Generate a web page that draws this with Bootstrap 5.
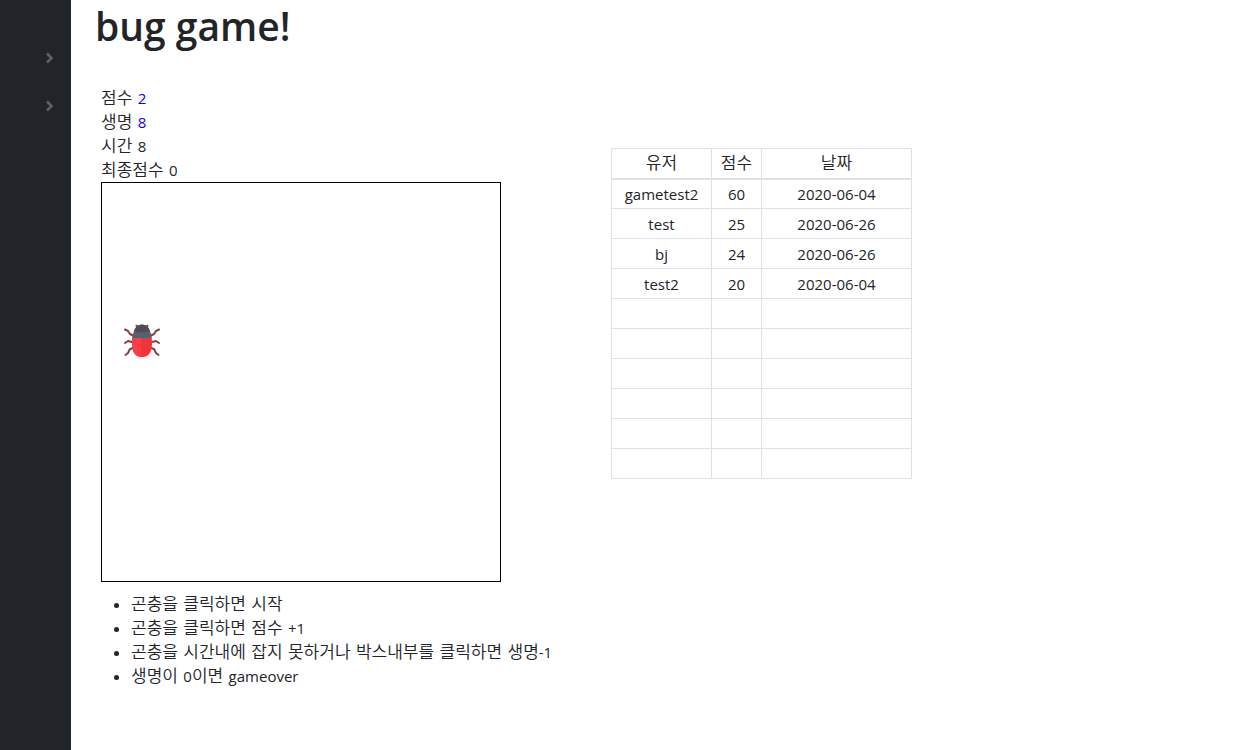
<!DOCTYPE html>
<html lang="ko">
<head>
<meta charset="utf-8">
<meta name="viewport" content="width=device-width, initial-scale=1">
<title>bug game!</title>
<link rel="stylesheet" href="https://cdn.jsdelivr.net/npm/bootstrap@5.3.0/dist/css/bootstrap.min.css">
<style>
body { font-family: "Open Sans", "Noto Sans CJK KR", sans-serif; font-size: 15px; line-height: 24px; color: #212529; }
.sidebar { width: 71px; background: #212529; padding-top: 34px; }
.sidebar a { height: 48px; padding-right: 17px; color: #5e6164; }
.content { padding-top: 2px; }
.title { font-size: 39px; line-height: 48px; font-weight: 600; margin-bottom: 36px; }
.ko { font-family: "DejaVu Sans", "Noto Sans CJK KR DemiLight", "Noto Sans CJK KR", sans-serif; font-weight: 350; font-size: 17px; }
.ko .latin { font-family: "Open Sans", sans-serif; font-weight: 400; font-size: 15px; }
.game { padding-left: 6px; gap: 50px; }
.board { width: 460px; }
.count { color: #00f; }
.count-visited { color: #1a00e6; }
.field { width: 400px; height: 400px; border: 1px solid #000; }
.bug { left: 20px; top: 140px; width: 40px; height: 38px; }
.rules { padding-left: 30px; margin-top: 10px; }
.rank { width: 301px; margin-top: 62px; table-layout: fixed; }
.rank th, .rank td { height: 30px; padding: 1px 0 0; line-height: 24px; border: 1px solid #dee2e6; }
.rank th { font-weight: 350; padding: 0; }
.rank thead th { border-bottom-width: 2px; }
</style>
</head>
<body>
<div class="d-flex min-vh-100">
  <nav class="sidebar flex-shrink-0" aria-label="메뉴">
    <a href="#" class="d-flex align-items-center justify-content-end" aria-label="펼치기"><svg width="9" height="12" viewBox="0 0 9 12" fill="none" stroke="currentColor" stroke-width="2.6"><path d="M2 1.5 6.500 6 2 10.500"/></svg></a>
    <a href="#" class="d-flex align-items-center justify-content-end" aria-label="펼치기"><svg width="9" height="12" viewBox="0 0 9 12" fill="none" stroke="currentColor" stroke-width="2.6"><path d="M2 1.5 6.500 6 2 10.500"/></svg></a>
  </nav>
  <main class="content flex-grow-1 px-4">
    <h1 class="title">bug game!</h1>
    <div class="game d-flex align-items-start">
      <section class="board flex-shrink-0">
        <div class="ko">점수 <span class="latin count">2</span></div>
        <div class="ko">생명 <span class="latin count-visited">8</span></div>
        <div class="ko">시간 <span class="latin">8</span></div>
        <div class="ko">최종점수 <span class="latin">0</span></div>
        <div class="field position-relative">
          <button type="button" class="bug position-absolute border-0 bg-transparent p-0 d-block" aria-label="곤충">
            <svg class="d-block" width="40" height="38" viewBox="0 0 40 38">
              <g fill="none" stroke="#873f43" stroke-width="2" stroke-linecap="round" stroke-linejoin="round">
                <path d="M12 13 8 11 6 8 3 6.500"/><path d="M28 13 32 11 34 8 37 6.500"/>
                <path d="M10 19 6 18 3 20"/><path d="M30 19 34 18 37 20"/>
                <path d="M11 25 8 26 6 30 3.500 32"/><path d="M29 25 32 26 34 30 36.500 32"/>
              </g>
              <path d="M11 12H29Q30 15 30 20Q30 34 20 34Q10 34 10 20Q10 15 11 12Z" fill="#ee353d"/>
              <path d="M20 12V34Q10 34 10 20Q10 15 11 12Z" fill="#fa3c44"/>
              <path d="M20 14V34" stroke="#d93840"/>
              <path d="M15 3Q20 0 25 3Q29 8 29.500 15H10.500Q11 8 15 3Z" fill="#5b5e6d"/>
              <path d="M15 3Q20 0 25 3Q27 5 28 8Q20 11 12 8Q13 5 15 3Z" fill="#4b4d59"/>
              <path d="M15.500 4 14 2M24.500 4 26 2" stroke="#814046" stroke-width="2"/>
            </svg>
          </button>
        </div>
        <ul class="rules ko mb-0">
          <li>곤충을 클릭하면 시작</li>
          <li>곤충을 클릭하면 점수 <span class="latin">+1</span></li>
          <li>곤충을 시간내에 잡지 못하거나 박스내부를 클릭하면 생명<span class="latin">-1</span></li>
          <li>생명이 <span class="latin">0</span>이면 <span class="latin">gameover</span></li>
        </ul>
      </section>
      <table class="rank text-center">
        <colgroup><col style="width:100px"><col style="width:50px"><col style="width:150px"></colgroup>
        <thead><tr class="ko"><th scope="col">유저</th><th scope="col">점수</th><th scope="col">날짜</th></tr></thead>
        <tbody>
          <tr><td>gametest2</td><td>60</td><td>2020-06-04</td></tr>
          <tr><td>test</td><td>25</td><td>2020-06-26</td></tr>
          <tr><td>bj</td><td>24</td><td>2020-06-26</td></tr>
          <tr><td>test2</td><td>20</td><td>2020-06-04</td></tr>
          <tr><td></td><td></td><td></td></tr>
          <tr><td></td><td></td><td></td></tr>
          <tr><td></td><td></td><td></td></tr>
          <tr><td></td><td></td><td></td></tr>
          <tr><td></td><td></td><td></td></tr>
          <tr><td></td><td></td><td></td></tr>
        </tbody>
      </table>
    </div>
  </main>
</div>
<script src="https://cdn.jsdelivr.net/npm/bootstrap@5.3.0/dist/js/bootstrap.bundle.min.js"></script>
</body>
</html>
